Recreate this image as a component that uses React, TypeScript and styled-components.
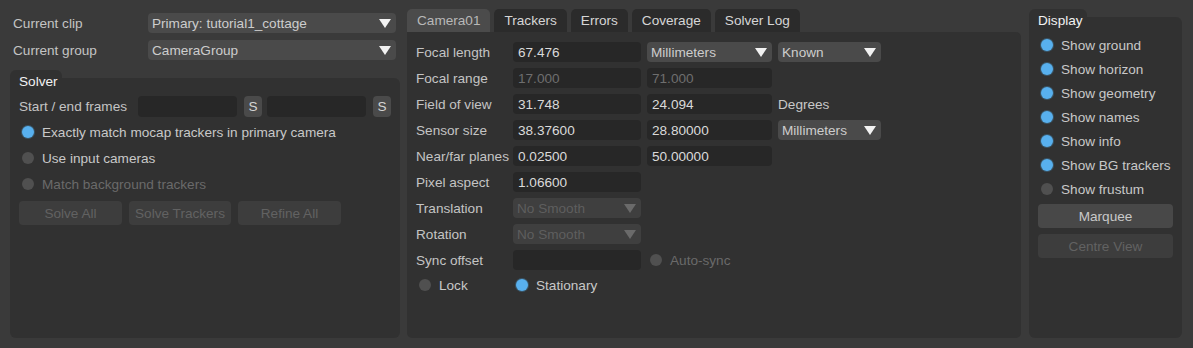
import React from "react";
import styled, { createGlobalStyle } from "styled-components";

const Global = createGlobalStyle`
  html, body { margin: 0; padding: 0; background: #3a3a3a; }
  body { font-family: "Liberation Sans", Arial, sans-serif; font-size: 13.6px; color: #c6c6c6; }
  * { box-sizing: border-box; }
`;

const Page = styled.div`
  width: 1193px;
  height: 348px;
  display: flex;
  align-items: stretch;
  padding: 9px 11px 10px 10px;
  background: #3a3a3a;
`;

const LeftCol = styled.div`
  width: 390px;
  display: flex;
  flex-direction: column;
`;

const TopForm = styled.div`
  display: flex;
  flex-direction: column;
  gap: 7px;
  padding: 4px 4px 0 3px;
  margin-bottom: 10px;
`;

const FormRow = styled.div`
  display: flex;
  align-items: center;
  height: 20px;
`;

const TopLabel = styled.div`
  width: 135px;
  color: #c4c4c4;
`;

const SelectBox = styled.div<{ $w?: number; $disabled?: boolean }>`
  ${(p) => (p.$w ? `width: ${p.$w}px;` : "flex: 1;")}
  height: 20px;
  border-radius: 4px;
  background: ${(p) => (p.$disabled ? "#3f3f3f" : "#4a4a4a")};
  color: ${(p) => (p.$disabled ? "#5e5e5e" : "#cdcdcd")};
  display: flex;
  align-items: center;
  justify-content: space-between;
  padding: 0 5px 0 4px;
  white-space: nowrap;
`;

const Arrow = ({ disabled }: { disabled?: boolean }) => (
  <svg width="12" height="9" viewBox="0 0 12 9">
    <polygon points="0,0 12,0 6,9" fill={disabled ? "#6a6a6a" : "#f2f2f2"} />
  </svg>
);

const Select = ({ text, w, disabled }: { text: string; w?: number; disabled?: boolean }) => (
  <SelectBox $w={w} $disabled={disabled}>
    <span>{text}</span>
    <Arrow disabled={disabled} />
  </SelectBox>
);

const GroupBox = styled.div`
  display: flex;
  flex-direction: column;
  flex: 1;
`;

const GroupTab = styled.div<{ $w: number }>`
  width: ${(p) => p.$w}px;
  height: 8px;
  background: #313131;
  border-radius: 6px 6px 0 0;
`;

const GroupBody = styled.div`
  flex: 1;
  background: #313131;
  border-radius: 0 6px 6px 6px;
  padding: 0 9px;
  display: flex;
  flex-direction: column;
`;

const GroupTitle = styled.div`
  color: #f2f2f2;
  line-height: 16px;
  margin-top: -4px;
`;

const FramesRow = styled.div`
  display: flex;
  align-items: center;
  height: 21px;
  margin-top: 6px;
`;

const FramesLabel = styled.div`
  width: 119px;
  color: #c4c4c4;
  white-space: nowrap;
`;

const Field = styled.div<{ $w: number; $disabled?: boolean; $h?: number; $ml?: number }>`
  width: ${(p) => p.$w}px;
  height: ${(p) => p.$h ?? 20}px;
  ${(p) => (p.$ml ? `margin-left: ${p.$ml}px;` : "")}
  background: #272727;
  border-radius: 4px;
  color: ${(p) => (p.$disabled ? "#6e6e6e" : "#dadada")};
  padding: 0 5px;
  display: flex;
  align-items: center;
  flex-shrink: 0;
`;

const SmallButton = styled.div<{ $ml: number }>`
  width: 18px;
  height: 21px;
  margin-left: ${(p) => p.$ml}px;
  border-radius: 4px;
  background: #4a4a4a;
  color: #d4d4d4;
  display: flex;
  align-items: center;
  justify-content: center;
`;

const RadioList = styled.div<{ $gap: number; $mt: number }>`
  display: flex;
  flex-direction: column;
  gap: ${(p) => p.$gap}px;
  margin-top: ${(p) => p.$mt}px;
`;

const RadioRow = styled.div<{ $w?: number }>`
  display: flex;
  align-items: center;
  height: 20px;
  ${(p) => (p.$w ? `width: ${p.$w}px;` : "")}
`;

const Dot = styled.div<{ $on?: boolean }>`
  width: 12px;
  height: 12px;
  border-radius: 50%;
  margin-left: 3px;
  margin-right: 8px;
  background: ${(p) => (p.$on ? "#58b0ee" : "#505050")};
  box-shadow: ${(p) => (p.$on ? "0 0 0 1px #3a5566" : "none")};
  flex-shrink: 0;
`;

const RadioText = styled.span<{ $disabled?: boolean }>`
  color: ${(p) => (p.$disabled ? "#6a6a6a" : "#c8c8c8")};
  white-space: nowrap;
`;

const Radio = ({ label, on, disabled, w }: { label: string; on?: boolean; disabled?: boolean; w?: number }) => (
  <RadioRow $w={w}>
    <Dot $on={on} />
    <RadioText $disabled={disabled}>{label}</RadioText>
  </RadioRow>
);

const ButtonRow = styled.div`
  display: flex;
  gap: 7px;
  margin-top: 7px;
`;

const PushButton = styled.div<{ $w?: number; $disabled?: boolean }>`
  ${(p) => (p.$w ? `width: ${p.$w}px;` : "")}
  height: 24px;
  border-radius: 4px;
  background: ${(p) => (p.$disabled ? "#3d3d3d" : "#484848")};
  color: ${(p) => (p.$disabled ? "#626262" : "#c8c8c8")};
  display: flex;
  align-items: center;
  justify-content: center;
  white-space: nowrap;
`;

const MidCol = styled.div`
  width: 614px;
  margin-left: 7px;
  display: flex;
  flex-direction: column;
`;

const TabBar = styled.div`
  display: flex;
  gap: 4px;
  height: 23px;
`;

const Tab = styled.div<{ $active?: boolean }>`
  padding: 0 10px;
  height: 23px;
  border-radius: 5px 5px 0 0;
  background: ${(p) => (p.$active ? "#4b4b4b" : "#2b2b2b")};
  color: ${(p) => (p.$active ? "#b8b8b8" : "#d6d6d6")};
  display: flex;
  align-items: center;
`;

const TabPanel = styled.div`
  flex: 1;
  background: #313131;
  border-radius: 0 5px 5px 5px;
  padding: 10px 9px;
  display: flex;
  flex-direction: column;
  gap: 6px;
`;

const PropRow = styled.div<{ $mt?: number }>`
  display: flex;
  align-items: center;
  height: 20px;
  gap: 6px;
  ${(p) => (p.$mt ? `margin-top: ${p.$mt}px;` : "")}
`;

const PropLabel = styled.div`
  width: 91px;
  color: #c4c4c4;
  white-space: nowrap;
  flex-shrink: 0;
`;

const UnitText = styled.div`
  color: #c8c8c8;
`;

const RightCol = styled.div`
  width: 153px;
  margin-left: 8px;
  display: flex;
  flex-direction: column;
`;

const ButtonStack = styled.div`
  display: flex;
  flex-direction: column;
  gap: 6px;
  margin-top: 5px;
`;

export default function App() {
  return (
    <>
      <Global />
      <Page>
        <LeftCol>
          <TopForm>
            <FormRow>
              <TopLabel>Current clip</TopLabel>
              <Select text="Primary: tutorial1_cottage" />
            </FormRow>
            <FormRow>
              <TopLabel>Current group</TopLabel>
              <Select text="CameraGroup" />
            </FormRow>
          </TopForm>
          <GroupBox>
            <GroupTab $w={52} />
            <GroupBody>
              <GroupTitle>Solver</GroupTitle>
              <FramesRow>
                <FramesLabel>Start / end frames</FramesLabel>
                <Field $w={99} $h={21} />
                <SmallButton $ml={7}>S</SmallButton>
                <Field $w={99} $h={21} $ml={5} />
                <SmallButton $ml={7}>S</SmallButton>
              </FramesRow>
              <RadioList $gap={6} $mt={5}>
                <Radio label="Exactly match mocap trackers in primary camera" on />
                <Radio label="Use input cameras" />
                <Radio label="Match background trackers" disabled />
              </RadioList>
              <ButtonRow>
                <PushButton $w={103} $disabled>Solve All</PushButton>
                <PushButton $w={102} $disabled>Solve Trackers</PushButton>
                <PushButton $w={103} $disabled>Refine All</PushButton>
              </ButtonRow>
            </GroupBody>
          </GroupBox>
        </LeftCol>

        <MidCol>
          <TabBar>
            <Tab $active>Camera01</Tab>
            <Tab>Trackers</Tab>
            <Tab>Errors</Tab>
            <Tab>Coverage</Tab>
            <Tab>Solver Log</Tab>
          </TabBar>
          <TabPanel>
            <PropRow>
              <PropLabel>Focal length</PropLabel>
              <Field $w={128}>67.476</Field>
              <Select text="Millimeters" w={125} />
              <Select text="Known" w={103} />
            </PropRow>
            <PropRow>
              <PropLabel>Focal range</PropLabel>
              <Field $w={128} $disabled>17.000</Field>
              <Field $w={125} $disabled>71.000</Field>
            </PropRow>
            <PropRow>
              <PropLabel>Field of view</PropLabel>
              <Field $w={128}>31.748</Field>
              <Field $w={125}>24.094</Field>
              <UnitText>Degrees</UnitText>
            </PropRow>
            <PropRow>
              <PropLabel>Sensor size</PropLabel>
              <Field $w={128}>38.37600</Field>
              <Field $w={125}>28.80000</Field>
              <Select text="Millimeters" w={103} />
            </PropRow>
            <PropRow>
              <PropLabel>Near/far planes</PropLabel>
              <Field $w={128}>0.02500</Field>
              <Field $w={125}>50.00000</Field>
            </PropRow>
            <PropRow>
              <PropLabel>Pixel aspect</PropLabel>
              <Field $w={128}>1.06600</Field>
            </PropRow>
            <PropRow>
              <PropLabel>Translation</PropLabel>
              <Select text="No Smooth" w={128} disabled />
            </PropRow>
            <PropRow>
              <PropLabel>Rotation</PropLabel>
              <Select text="No Smooth" w={128} disabled />
            </PropRow>
            <PropRow>
              <PropLabel>Sync offset</PropLabel>
              <Field $w={128} />
              <Radio label="Auto-sync" disabled />
            </PropRow>
            <PropRow $mt={-1}>
              <Radio label="Lock" w={91} />
              <Radio label="Stationary" on />
            </PropRow>
          </TabPanel>
        </MidCol>

        <RightCol>
          <GroupBox>
            <GroupTab $w={58} />
            <GroupBody>
              <GroupTitle>Display</GroupTitle>
              <RadioList $gap={4} $mt={6}>
                <Radio label="Show ground" on />
                <Radio label="Show horizon" on />
                <Radio label="Show geometry" on />
                <Radio label="Show names" on />
                <Radio label="Show info" on />
                <Radio label="Show BG trackers" on />
                <Radio label="Show frustum" />
              </RadioList>
              <ButtonStack>
                <PushButton>Marquee</PushButton>
                <PushButton $disabled>Centre View</PushButton>
              </ButtonStack>
            </GroupBody>
          </GroupBox>
        </RightCol>
      </Page>
    </>
  );
}
